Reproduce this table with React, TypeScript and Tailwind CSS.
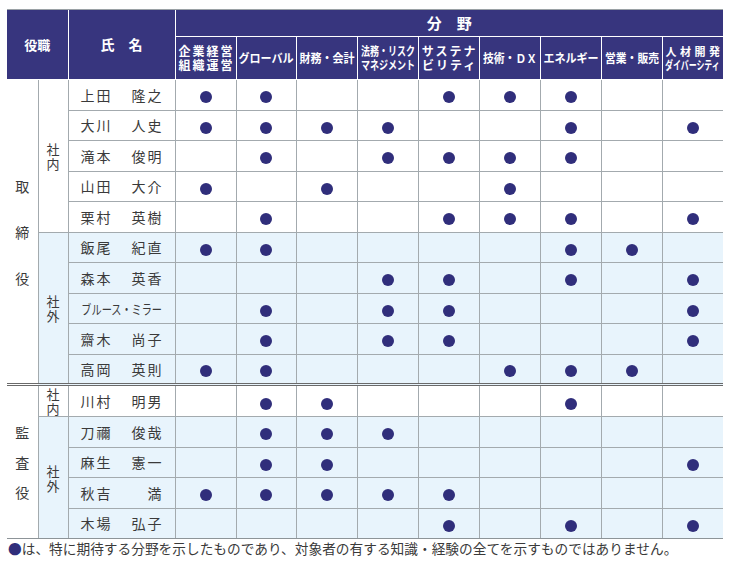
import React from 'react';

const FONT = '"Noto Sans CJK JP", "Noto Sans", sans-serif';

type Line = { t: string; c: string };
const cats: Line[][] = [
  [
    { t: '企業経営', c: 'tracking-[2px] ml-[2px]' },
    { t: '組織運営', c: 'tracking-[2px] ml-[2px]' },
  ],
  [{ t: 'グローバル', c: 'scale-x-[0.92]' }],
  [{ t: '財務・会計', c: 'scale-x-[0.92]' }],
  [
    { t: '法務・リスク', c: 'scale-x-[0.75]' },
    { t: 'マネジメント', c: 'scale-x-[0.75]' },
  ],
  [
    { t: 'サステナ', c: 'tracking-[2px] ml-[2px]' },
    { t: 'ビリティ', c: 'tracking-[2px] ml-[2px]' },
  ],
  [{ t: '技術・ＤＸ', c: 'scale-x-[0.9]' }],
  [{ t: 'エネルギー', c: 'scale-x-[0.92]' }],
  [{ t: '営業・販売', c: 'scale-x-[0.9]' }],
  [
    { t: '人材開発', c: '!text-[11px] tracking-[3.5px] ml-[3.5px]' },
    { t: 'ダイバーシティ', c: 'scale-x-[0.66]' },
  ],
];

type Row = { f: string; g: string; d: string; full?: string };
const rows: Row[] = [
  { f: '上田', g: '隆之', d: '110011100' },
  { f: '大川', g: '人史', d: '111100101' },
  { f: '滝本', g: '俊明', d: '010111100' },
  { f: '山田', g: '大介', d: '101001000' },
  { f: '栗村', g: '英樹', d: '010011101' },
  { f: '飯尾', g: '紀直', d: '110000110' },
  { f: '森本', g: '英香', d: '000110101' },
  { f: '', g: '', d: '010110001', full: 'ブルース・ミラー' },
  { f: '齋木', g: '尚子', d: '010110001' },
  { f: '高岡', g: '英則', d: '110001110' },
  { f: '川村', g: '明男', d: '011000100' },
  { f: '刀禰', g: '俊哉', d: '011100000' },
  { f: '麻生', g: '憲一', d: '011000001' },
  { f: '秋吉', g: '満', d: '111110000' },
  { f: '木場', g: '弘子', d: '000010101' },
];

const G = 'border-[#a3aaae]';

function Dot() {
  return <span className="inline-block w-[12px] h-[12px] rounded-full bg-[#302e7b] align-middle" />;
}

function Name({ r }: { r: Row }) {
  if (r.full) {
    return (
      <div className="flex justify-center w-[83px] ml-[12px]">
        <span className="inline-block whitespace-nowrap text-[13px] scale-x-[0.78]">{r.full}</span>
      </div>
    );
  }
  return (
    <div className="flex pl-[12px] text-[14px] leading-[20px]">
      <span className="w-[51px] tracking-[2px]">{r.f}</span>
      <span className="w-[32px] text-right tracking-[2px]">{r.g}</span>
    </div>
  );
}

export default function App() {
  const body: React.ReactNode[] = [];
  rows.forEach((r, i) => {
    const outside = (i >= 5 && i <= 9) || i >= 11;
    const bg = outside ? 'bg-[#e8f4fc]' : 'bg-white';
    const dbl = i === 9;
    const last = i === 14;
    const bottom = dbl
      ? 'border-b-[3px] [border-bottom-style:double] border-b-[#6a6a6a]'
      : last
      ? 'border-b border-b-[#8d9498]'
      : '';
    body.push(
      <tr key={i} className="h-[30.5px]">
        {i === 0 && (
          <td
            rowSpan={10}
            className={`border-0 border-r ${G} bg-white border-b-[3px] [border-bottom-style:double] border-b-[#6a6a6a] text-center align-middle`}
          >
            <div className="flex flex-col items-center gap-[32px] text-[14px] leading-[14px]">
              <span>取</span>
              <span>締</span>
              <span>役</span>
            </div>
          </td>
        )}
        {i === 10 && (
          <td rowSpan={5} className={`border-0 border-r ${G} bg-white border-b border-b-[#8d9498] text-center align-middle`}>
            <div className="flex flex-col items-center gap-[16px] text-[14px] leading-[14px]">
              <span>監</span>
              <span>査</span>
              <span>役</span>
            </div>
          </td>
        )}
        {(i === 0 || i === 5 || i === 10 || i === 11) && (
          <td
            rowSpan={i === 0 || i === 5 ? 5 : i === 10 ? 1 : 4}
            className={`border ${G} ${bg} ${i === 5 ? 'border-b-[3px] [border-bottom-style:double] border-b-[#6a6a6a]' : ''} ${i === 11 ? 'border-b border-b-[#8d9498]' : ''} text-center align-middle`}
          >
            <div className="flex flex-col items-center text-[13px] leading-[15px]">
              <span className="h-[15px]">社</span>
              <span className="h-[15px]">{i === 0 || i === 10 ? '内' : '外'}</span>
            </div>
          </td>
        )}
        <td className={`border ${G} ${bg} ${bottom} align-middle p-0`}>
          <Name r={r} />
        </td>
        {r.d.split('').map((v, j) => (
          <td key={j} className={`border ${G} ${bg} ${bottom} ${j === 8 ? 'border-r-0' : ''} text-center align-middle p-0`}>
            {v === '1' ? <Dot /> : null}
          </td>
        ))}
      </tr>
    );
  });

  return (
    <div className="w-[733px] h-[566px] bg-white text-[#3a3a3a] overflow-hidden" style={{ fontFamily: FONT }}>
      <div className="pt-[9px] pl-[7px]">
        <div className="w-[716px] h-px bg-[#9aa1a5]" />
        <table className="table-fixed border-collapse w-[716px]">
          <colgroup>
            <col className="w-[31px]" />
            <col className="w-[30px]" />
            <col className="w-[107px]" />
            <col className="w-[61px]" />
            <col className="w-[60px]" />
            <col className="w-[61px]" />
            <col className="w-[61px]" />
            <col className="w-[61px]" />
            <col className="w-[61px]" />
            <col className="w-[61px]" />
            <col className="w-[61px]" />
            <col className="w-[61px]" />
          </colgroup>
          <thead>
            <tr className="h-[26px]">
              <th colSpan={2} rowSpan={2} className="bg-[#37357e] border border-white border-l-0 border-t-0 text-white text-[13px] font-bold">
                役職
              </th>
              <th rowSpan={2} className="bg-[#37357e] border border-white border-t-0 text-white text-[14px] font-bold">
                氏　名
              </th>
              <th colSpan={9} className="bg-[#37357e] border border-white border-t-0 border-r-0 text-white text-[15px] font-bold leading-[26px]">
                分　野
              </th>
            </tr>
            <tr className="h-[43px]">
              {cats.map((lines, k) => (
                <th key={k} className={`bg-[#37357e] border border-white ${k === 8 ? 'border-r-0' : ''} text-white font-bold p-0 overflow-hidden`}>
                  <div className="flex flex-col items-center">
                    {lines.map((l, m) => (
                      <div key={m} className="flex justify-center w-full leading-[14px]">
                        <span className={`inline-block whitespace-nowrap text-[12px] ${l.c}`}>{l.t}</span>
                      </div>
                    ))}
                  </div>
                </th>
              ))}
            </tr>
          </thead>
          <tbody>{body}</tbody>
        </table>
      </div>
      <div className="pl-[8px] text-[13.7px] leading-[18px] whitespace-nowrap">
        <span className="text-[#302e7b]">●</span>は、特に期待する分野を示したものであり、対象者の有する知識・経験の全てを示すものではありません。
      </div>
    </div>
  );
}
